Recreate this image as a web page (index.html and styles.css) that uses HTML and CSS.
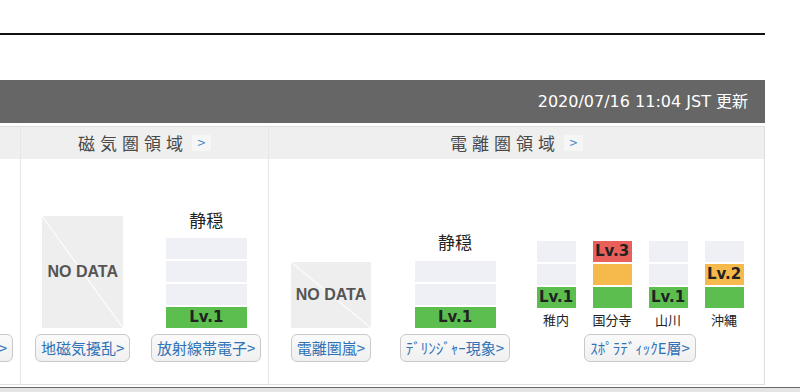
FILE: index.html
```html
<!DOCTYPE html>
<html lang="ja">
<head>
    <meta charset="UTF-8">
    <meta name="viewport" content="width=device-width, initial-scale=1.0">
    <title>宇宙天気 -- 現況</title>
    <link rel="stylesheet" href="styles.css">
</head>
<body>

<div class="page">
    <div class="rule"></div>
    <div class="bar">2020/07/16 11:04 JST 更新</div>

    <div class="panel">
        <div class="col col-edge">
            <div class="col-head"></div>
            <div class="col-body">
                <a class="btn" href="#">太陽フレア&gt;</a>
            </div>
        </div>

        <div class="col col-mag">
            <div class="col-head">
                <span class="head-title">磁気圏領域</span><a class="head-link" href="#">&gt;</a>
            </div>
            <div class="col-body">
                <div class="item">
                    <div class="nodata nodata-tall">NO DATA</div>
                    <a class="btn" href="#">地磁気擾乱&gt;</a>
                </div>
                <div class="item">
                    <div class="state">静穏</div>
                    <div class="gauge">
                        <div class="seg"></div>
                        <div class="seg"></div>
                        <div class="seg"></div>
                        <div class="seg lv1">Lv.1</div>
                    </div>
                    <a class="btn" href="#">放射線帯電子&gt;</a>
                </div>
            </div>
        </div>

        <div class="col col-ion">
            <div class="col-head">
                <span class="head-title">電離圏領域</span><a class="head-link" href="#">&gt;</a>
            </div>
            <div class="col-body">
                <div class="item">
                    <div class="nodata">NO DATA</div>
                    <a class="btn" href="#">電離圏嵐&gt;</a>
                </div>
                <div class="item">
                    <div class="state state-low">静穏</div>
                    <div class="gauge">
                        <div class="seg"></div>
                        <div class="seg"></div>
                        <div class="seg lv1">Lv.1</div>
                    </div>
                    <a class="btn" href="#">ﾃﾞﾘﾝｼﾞｬｰ現象&gt;</a>
                </div>
                <div class="item item-wide">
                    <div class="stations">
                        <div class="station">
                            <div class="gauge gauge-small">
                                <div class="seg"></div>
                                <div class="seg"></div>
                                <div class="seg lv1">Lv.1</div>
                            </div>
                            <div class="station-name">稚内</div>
                        </div>
                        <div class="station">
                            <div class="gauge gauge-small">
                                <div class="seg lv3">Lv.3</div>
                                <div class="seg lv2"></div>
                                <div class="seg lv1"></div>
                            </div>
                            <div class="station-name">国分寺</div>
                        </div>
                        <div class="station">
                            <div class="gauge gauge-small">
                                <div class="seg"></div>
                                <div class="seg"></div>
                                <div class="seg lv1">Lv.1</div>
                            </div>
                            <div class="station-name">山川</div>
                        </div>
                        <div class="station">
                            <div class="gauge gauge-small">
                                <div class="seg"></div>
                                <div class="seg lv2">Lv.2</div>
                                <div class="seg lv1"></div>
                            </div>
                            <div class="station-name">沖縄</div>
                        </div>
                    </div>
                    <a class="btn btn-tight" href="#">ｽﾎﾟﾗﾃﾞｨｯｸE層&gt;</a>
                </div>
            </div>
        </div>
    </div>

    <div class="scrollbar"></div>
</div>

</body>
</html>
```

FILE: styles.css
```css
body {
    margin: 0;
    background: #fff;
    font-family: "Noto Sans CJK JP", sans-serif;
    color: #222;
    overflow: hidden;
}
a {
    text-decoration: none;
}
.page {
    width: 800px;
}
.rule {
    width: 765px;
    height: 2px;
    margin-top: 33px;
    background: #111;
}
.bar {
    width: 765px;
    height: 43px;
    margin-top: 45px;
    box-sizing: border-box;
    padding-right: 17px;
    background: #666;
    color: #fff;
    font-family: "DejaVu Sans", "Noto Sans CJK JP", sans-serif;
    font-size: 16px;
    line-height: 43px;
    text-align: right;
}
.panel {
    display: flex;
    width: 765px;
    margin-top: 3px;
    box-sizing: border-box;
    border: 1px solid #dedede;
    border-left: none;
}
.col {
    display: flex;
    flex-direction: column;
}
.col + .col {
    border-left: 1px solid #e6e6e6;
}
.col-edge {
    width: 20px;
    overflow: hidden;
}
.col-mag {
    width: 247px;
}
.col-ion {
    flex: 1;
}
.col-head {
    height: 32px;
    background: #efefef;
    line-height: 32px;
    text-align: center;
    white-space: nowrap;
}
.head-title {
    font-size: 17px;
    letter-spacing: 5px;
    color: #4a4a4a;
}
.head-link {
    display: inline-block;
    width: 19px;
    height: 16px;
    margin-left: 4px;
    background: #f6f6f6;
    color: #3a80c4;
    font-size: 14px;
    line-height: 15px;
    vertical-align: 2px;
}
.col-body {
    display: flex;
    align-items: flex-end;
    height: 225px;
    box-sizing: border-box;
    padding-bottom: 22px;
}
.col-edge .col-body {
    justify-content: flex-end;
    padding-right: 7px;
}
.item {
    display: flex;
    flex-direction: column;
    align-items: center;
    width: 124px;
    flex-shrink: 0;
}
.col-mag .item {
    flex: 1;
}
.item-wide {
    width: 224px;
    margin-left: 11px;
}
.btn {
    display: block;
    flex-shrink: 0;
    height: 28px;
    box-sizing: border-box;
    margin-top: 6px;
    padding: 0 5px;
    border: 1px solid #c9c9c9;
    border-radius: 6px;
    background: linear-gradient(#fafafa, #f0f0f0);
    color: #2f72b6;
    font-size: 15px;
    line-height: 26px;
    white-space: nowrap;
}
.btn-tight {
    margin-top: 4px;
}
.nodata {
    width: 80px;
    height: 66px;
    background: linear-gradient(to top right, #eee calc(50% - 1px), #fff 50%, #eee calc(50% + 1px));
    color: #555;
    font-family: "Liberation Sans", Arial, sans-serif;
    font-size: 16px;
    font-weight: bold;
    display: flex;
    align-items: center;
    justify-content: center;
    white-space: nowrap;
}
.nodata-tall {
    width: 81px;
    height: 112px;
}
.state {
    font-size: 17px;
    line-height: 20px;
    margin-bottom: 8px;
    color: #222;
}
.state-low {
    margin-bottom: 9px;
}
.gauge {
    display: flex;
    flex-direction: column;
    gap: 2px;
    width: 81px;
}
.gauge-small {
    width: 39px;
}
.seg {
    height: 21px;
    background: #eff0f5;
    color: #222;
    font-family: "DejaVu Sans", sans-serif;
    font-size: 15px;
    font-weight: bold;
    line-height: 21px;
    text-align: center;
    white-space: nowrap;
}
.lv1 {
    background: #5cbe4f;
}
.lv2 {
    background: #f6b94b;
}
.lv3 {
    background: #e9605b;
}
.stations {
    display: flex;
}
.station {
    display: flex;
    flex-direction: column;
    align-items: center;
    width: 56px;
}
.station-name {
    margin-top: 2px;
    font-size: 13px;
    line-height: 20px;
}
.scrollbar {
    height: 4px;
    margin-top: 2px;
    border-top: 1px solid #6a6a6a;
    background: #e4e4e4;
}
```
